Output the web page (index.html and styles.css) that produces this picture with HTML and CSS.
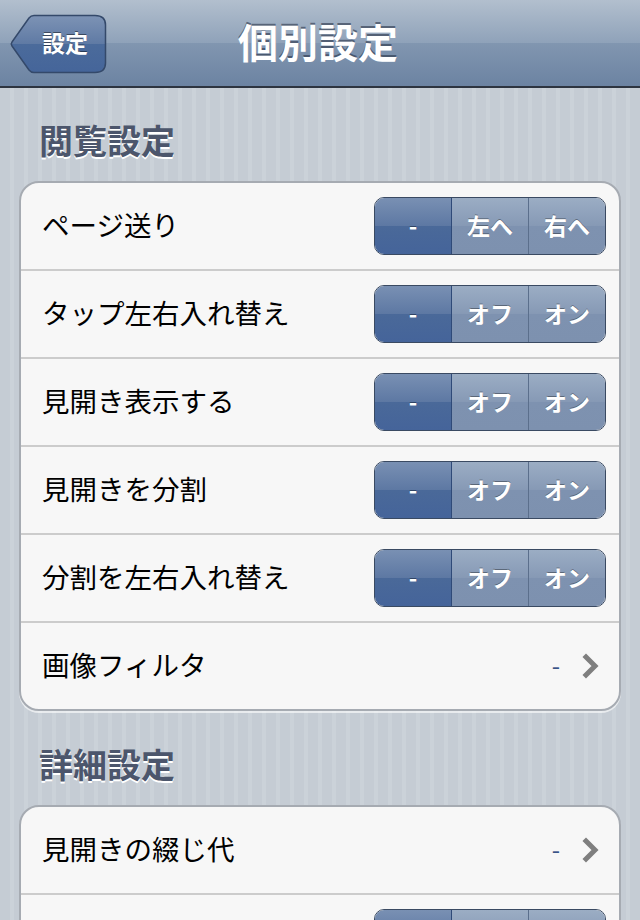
FILE: index.html
```html
<!DOCTYPE html>
<html lang="ja">
<head>
    <meta charset="UTF-8">
    <meta name="viewport" content="width=device-width, initial-scale=1.0">
    <title>個別設定</title>
    <link rel="stylesheet" href="styles.css">
</head>
<body>
    <div class="navbar">
        <div class="nav-left">
            <button class="back-button">
                <svg class="back-shape" width="98" height="60" viewBox="0 0 98 60">
                    <defs>
                        <linearGradient id="backFill" x1="0" y1="0" x2="0" y2="1">
                            <stop offset="0" stop-color="#7d93b5"/>
                            <stop offset="0.5" stop-color="#5f7aa4"/>
                            <stop offset="0.5" stop-color="#4b6b9b"/>
                            <stop offset="1" stop-color="#45659a"/>
                        </linearGradient>
                    </defs>
                    <path d="M25 1.5 H86 Q96.5 1.5 96.5 11 V49 Q96.5 58.5 86 58.5 H25 Q22 58.5 20 56 L3 32 Q1.5 30 3 28 L20 4 Q22 1.5 25 1.5 Z"
                          fill="url(#backFill)" stroke="#34496a" stroke-width="1.5"/>
                </svg>
                <span class="back-label">設定</span>
            </button>
        </div>
        <h1 class="nav-title">個別設定</h1>
        <div class="nav-right"></div>
    </div>

    <div class="content">
        <h2 class="group-title">閲覧設定</h2>
        <div class="group">
            <div class="row">
                <span class="row-label">ページ送り</span>
                <div class="segmented">
                    <span class="segment selected">-</span>
                    <span class="segment">左へ</span>
                    <span class="segment">右へ</span>
                </div>
            </div>
            <div class="row">
                <span class="row-label">タップ左右入れ替え</span>
                <div class="segmented">
                    <span class="segment selected">-</span>
                    <span class="segment">オフ</span>
                    <span class="segment">オン</span>
                </div>
            </div>
            <div class="row">
                <span class="row-label">見開き表示する</span>
                <div class="segmented">
                    <span class="segment selected">-</span>
                    <span class="segment">オフ</span>
                    <span class="segment">オン</span>
                </div>
            </div>
            <div class="row">
                <span class="row-label">見開きを分割</span>
                <div class="segmented">
                    <span class="segment selected">-</span>
                    <span class="segment">オフ</span>
                    <span class="segment">オン</span>
                </div>
            </div>
            <div class="row">
                <span class="row-label">分割を左右入れ替え</span>
                <div class="segmented">
                    <span class="segment selected">-</span>
                    <span class="segment">オフ</span>
                    <span class="segment">オン</span>
                </div>
            </div>
            <div class="row">
                <span class="row-label">画像フィルタ</span>
                <div class="detail">
                    <span class="detail-value">-</span>
                    <svg class="chevron" width="18" height="26" viewBox="0 0 18 26">
                        <polyline points="4,4 13,13 4,22" fill="none" stroke="#7f7f7f" stroke-width="5" stroke-linecap="square"/>
                    </svg>
                </div>
            </div>
        </div>

        <h2 class="group-title">詳細設定</h2>
        <div class="group">
            <div class="row">
                <span class="row-label">見開きの綴じ代</span>
                <div class="detail">
                    <span class="detail-value">-</span>
                    <svg class="chevron" width="18" height="26" viewBox="0 0 18 26">
                        <polyline points="4,4 13,13 4,22" fill="none" stroke="#7f7f7f" stroke-width="5" stroke-linecap="square"/>
                    </svg>
                </div>
            </div>
            <div class="row">
                <span class="row-label"></span>
                <div class="segmented">
                    <span class="segment selected"></span>
                    <span class="segment"></span>
                    <span class="segment"></span>
                </div>
            </div>
        </div>
    </div>
</body>
</html>
```

FILE: styles.css
```css
body {
    margin: 0;
    padding: 0;
    height: 920px;
    overflow: hidden;
    font-family: "Noto Sans CJK JP", "Noto Sans", sans-serif;
    color: #000;
    background: repeating-linear-gradient(90deg, #c5ccd4 0, #c5ccd4 10px, #cbd2d9 10px, #cbd2d9 14px);
}

/* navigation bar */
.navbar {
    display: grid;
    grid-template-columns: 1fr auto 1fr;
    align-items: center;
    height: 86px;
    border-top: 1px solid #cdd5df;
    border-bottom: 2px solid #2d3440;
    box-sizing: content-box;
    background: linear-gradient(#b2bfce 0%, #8fa2b9 50%, #8196b0 50%, #6c83a2 100%);
    margin-top: -1px;
}

.nav-left {
    padding-left: 9px;
}

.back-button {
    position: relative;
    width: 98px;
    height: 60px;
    padding: 0 0 0 18px;
    border: none;
    background: none;
    display: flex;
    align-items: center;
    justify-content: center;
    margin-top: 1px;
}

.back-shape {
    position: absolute;
    left: 0;
    top: 0;
}

.back-label {
    position: relative;
    font-family: "Noto Sans CJK JP", sans-serif;
    font-size: 23px;
    font-weight: bold;
    color: #fff;
    text-shadow: 0 -1px 0 rgba(0, 0, 0, 0.45);
    margin: -3px 0 0 -4px;
}

.nav-title {
    margin: -4px 0 0 -4px;
    font-size: 40px;
    font-weight: bold;
    color: #fff;
    line-height: 1;
    text-shadow: 0 -2px 0 rgba(40, 50, 70, 0.6);
}

/* grouped table */
.content {
    padding: 0 19px;
}

.group-title {
    margin: 0;
    padding: 32px 0 21px 20px;
    font-size: 34px;
    line-height: 40px;
    font-weight: bold;
    color: #4c566c;
    text-shadow: 0 2px 0 #fff;
}

.group-title span {
    display: block;
}

.group {
    background: #f7f7f7;
    border: 2px solid #a6abb2;
    border-radius: 20px;
    box-shadow: 0 2px 0 rgba(255, 255, 255, 0.6);
    margin-bottom: 1px;
}

.row {
    display: flex;
    align-items: center;
    justify-content: space-between;
    height: 88px;
    padding: 0 13px 0 21px;
    box-sizing: border-box;
    border-top: 2px solid #cccccc;
}

.row:first-child {
    border-top: none;
    height: 86px;
}

.row-label {
    font-size: 27.5px;
    color: #000;
    margin-top: -5px;
}

/* segmented control */
.segmented {
    display: flex;
    width: 232px;
    height: 58px;
    box-sizing: border-box;
    border: 1px solid #3a4a62;
    border-radius: 10px;
    overflow: hidden;
}

.segment {
    flex: 1;
    display: flex;
    align-items: center;
    justify-content: center;
    font-size: 23px;
    font-weight: bold;
    color: #fff;
    text-shadow: 0 -1px 0 rgba(0, 0, 0, 0.35);
    background: linear-gradient(#9badc4 0%, #8699b5 50%, #7e92b0 50%, #7d91af 100%);
    border-left: 1px solid #5b6f8c;
    padding-bottom: 3px;
}

.segment:first-child {
    border-left: none;
}

.segment.selected {
    background: linear-gradient(#7990b3 0%, #5d78a3 50%, #4a6999 50%, #45649a 100%);
    border-right: 1px solid #2f4a78;
}

.segment.selected + .segment {
    border-left: none;
}

/* disclosure */
.detail {
    display: flex;
    align-items: center;
    gap: 22px;
    padding-right: 6px;
}

.detail-value {
    font-size: 24px;
    color: #385487;
    margin-top: -4px;
}

.chevron {
    display: block;
}
```
